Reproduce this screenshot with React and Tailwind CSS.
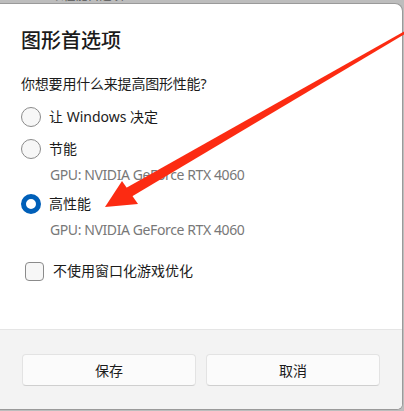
import React from 'react';

const font = { fontFamily: '"Segoe UI", "Noto Sans", "Noto Sans CJK SC", sans-serif' };

const Radio = ({ checked }) =>
  checked ? (
    <span className="w-[20px] h-[20px] rounded-full border-[5px] border-[#005fb8] bg-white shrink-0" />
  ) : (
    <span className="w-[20px] h-[20px] rounded-full border border-[#8b8b8b] bg-[#f7f7f7] shrink-0" />
  );

const Option = ({ label, gpu, checked, className = '' }) => (
  <div className={className}>
    <div className="flex items-center gap-[8px] h-[20px]">
      <Radio checked={checked} />
      <span className="text-[14px] leading-[20px] text-[#1b1b1b]">{label}</span>
    </div>
    {gpu && (
      <div className="pl-[29px] mt-[6px] text-[14px] leading-[20px] text-[#787878] tracking-[-0.4px]">
        GPU: NVIDIA GeForce RTX 4060
      </div>
    )}
  </div>
);

// red annotation arrow drawn over the dialog
const Arrow = () => (
  <svg className="absolute inset-0 pointer-events-none" width="404" height="411" viewBox="0 0 404 411">
    <polygon points="404,31.5 404,34.5 131,197 126,188" fill="#fc2b12" />
    <polygon points="105,207 122,181 138,204" fill="#fc2b12" />
  </svg>
);

export default function App() {
  return (
    <div className="relative w-[404px] h-[411px] bg-[#bdbdbd] overflow-hidden" style={font}>
      {/* window behind the dialog */}
      <div className="h-[3px] overflow-hidden">
        <div className="-mt-[11px] text-[12px] leading-[14px] text-[#555] pl-[2px] whitespace-nowrap">
          windows以性能首选项
        </div>
      </div>

      <div className="w-[403px] h-[407px] bg-white rounded-tr-[8px] rounded-br-[6px] border-r border-t border-b border-[#9a9a9a] flex flex-col overflow-hidden">
        <div className="pt-[23px] px-[21px]">
          <h1 className="text-[20px] leading-[28px] text-[#1b1b1b] font-medium">图形首选项</h1>
          <p className="mt-[19px] text-[14px] leading-[20px] text-[#1b1b1b] tracking-[-0.2px]">你想要用什么来提高图形性能?</p>

          <Option className="mt-[13px]" label="让 Windows 决定" />
          <Option className="mt-[12px]" label="节能" gpu />
          <Option className="mt-[9px]" label="高性能" gpu checked />

          <div className="mt-[21px] pl-[4px] flex items-center gap-[9px]">
            <span className="w-[19px] h-[19px] rounded-[4px] border border-[#8b8b8b] bg-[#f7f7f7] shrink-0" />
            <span className="text-[14px] leading-[20px] text-[#1b1b1b]">不使用窗口化游戏优化</span>
          </div>
        </div>

        <div className="mt-auto h-[80px] bg-[#f3f3f3] border-t border-[#e5e5e5] px-[22px] pt-[24px] flex gap-[10px]">
          <button className="flex-1 h-[32px] rounded-[4px] bg-[#fbfbfb] border border-[#e3e3e3] border-b-[#cfcfcf] text-[14px] text-[#1b1b1b]">
            保存
          </button>
          <button className="flex-1 h-[32px] rounded-[4px] bg-[#fbfbfb] border border-[#e3e3e3] border-b-[#cfcfcf] text-[14px] text-[#1b1b1b]">
            取消
          </button>
        </div>
      </div>

      <Arrow />
    </div>
  );
}
